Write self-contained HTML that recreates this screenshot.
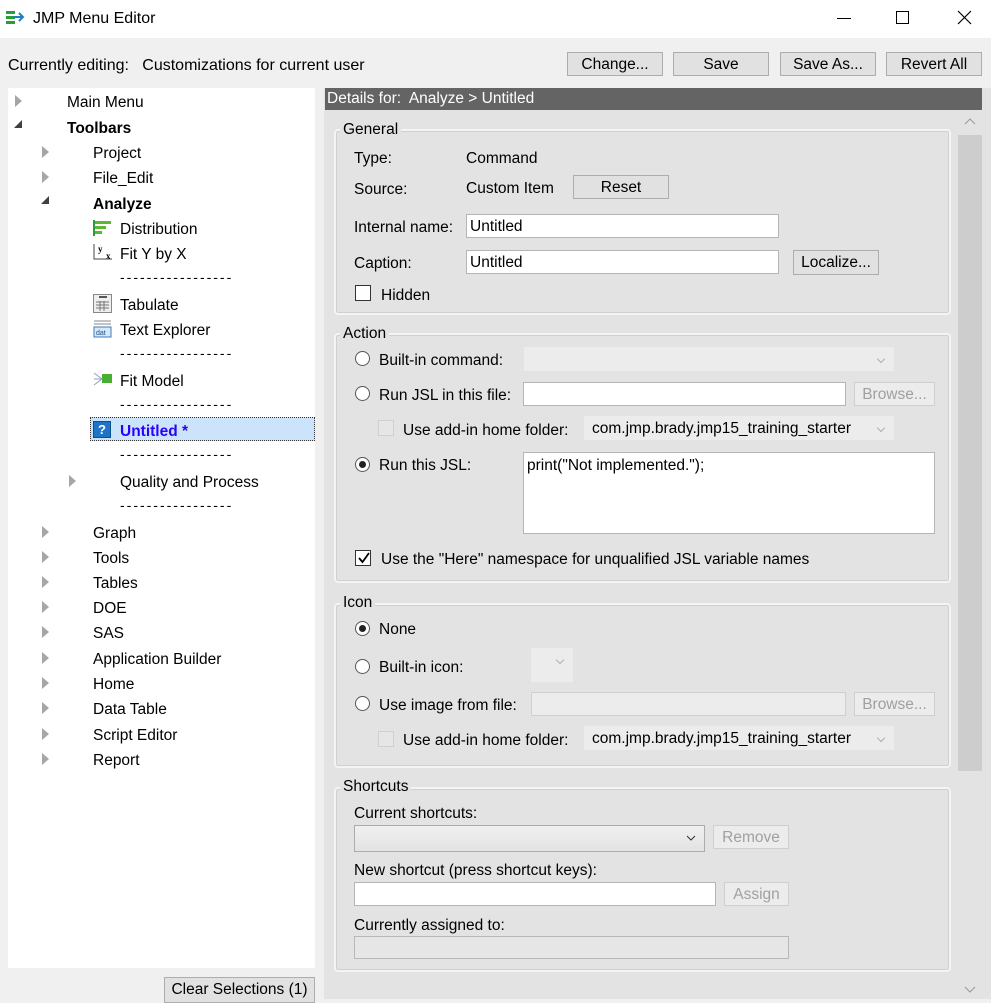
<!DOCTYPE html>
<html><head><meta charset="utf-8"><style>
*{box-sizing:border-box;margin:0;padding:0}
body{width:991px;height:999px;position:relative;background:#f0f0f0;font-family:"Liberation Sans",sans-serif;font-size:15.5px;color:#000;overflow:hidden}
.a{position:absolute;white-space:nowrap}
.t{position:absolute;height:20px;line-height:20px;white-space:nowrap;transform:translateY(2px)}
.btn{position:absolute;background:#e1e1e1;border:1px solid #adadad;text-align:center;line-height:24px;height:24px}
.dis{color:#a0a0a0;background:#ececec;border-color:#cfcfcf}
.in{position:absolute;background:#fff;border:1px solid #b5b5b5;height:24px;line-height:24px;padding-left:3px}
.grp{position:absolute;left:334px;width:617px;border:2px solid #f4f4f4;border-radius:4px;box-shadow:inset 0 0 0 1px #d0d0d0}
.gl{position:absolute;background:#e3e3e3;padding:0 3px;line-height:18px;transform:translateY(1px)}
.tri{position:absolute;width:0;height:0;border-top:6px solid transparent;border-bottom:6px solid transparent;border-left:7px solid #a6a6a6}
.tro{position:absolute;width:0;height:0;border-left:8px solid transparent;border-bottom:8px solid #404040}
.rad{position:absolute;width:15px;height:15px;border:1px solid #555;border-radius:50%;background:#fff}
.rad.on::after{content:"";position:absolute;left:3px;top:3px;width:7px;height:7px;border-radius:50%;background:#222}
.cb{position:absolute;width:16px;height:16px;border:1px solid #333;background:#fff}
.cbd{position:absolute;width:16px;height:16px;border:1px solid #cfcfcf;background:#e6e6e6}
.combo{position:absolute;background:#ececec;height:24px;line-height:26px;padding-left:8px}
.combo::after{content:"";position:absolute;right:10px;top:9px;width:5px;height:5px;border-right:1px solid #b0b0b0;border-bottom:1px solid #b0b0b0;transform:rotate(45deg)}
.dash{position:absolute;color:#000;font-size:14px;letter-spacing:2px;transform:translateY(3px)}
</style></head><body>
<div class="a" style="left:0;top:0;width:991px;height:38px;background:#fff"></div>
<svg class="a" style="left:5px;top:8px" width="20" height="20"><rect x="1" y="3" width="9" height="3" fill="#2a9d3a"/><rect x="1" y="8" width="9" height="3" fill="#2a9d3a"/><rect x="1" y="13" width="9" height="3" fill="#2a9d3a"/><path d="M8 9 L18 9 M14 5 L18 9 L14 13" stroke="#1e7fc8" stroke-width="2" fill="none"/></svg>
<div class="t" style="left:33px;top:7px;font-size:16px">JMP Menu Editor</div>
<div class="a" style="left:837px;top:18px;width:14px;height:1px;background:#000"></div>
<div class="a" style="left:896px;top:11px;width:13px;height:13px;border:1px solid #000"></div>
<svg class="a" style="left:957px;top:10px" width="15" height="15"><path d="M1 1L14 14M14 1L1 14" stroke="#000" stroke-width="1.2"/></svg>
<div class="t" style="left:8px;top:54px;font-size:16px">Currently editing:&nbsp;&nbsp; Customizations for current user</div>
<div class="btn" style="left:567px;top:52px;width:96px">Change...</div>
<div class="btn" style="left:673px;top:52px;width:96px">Save</div>
<div class="btn" style="left:780px;top:52px;width:96px">Save As...</div>
<div class="btn" style="left:886px;top:52px;width:96px">Revert All</div>
<div class="a" style="left:8px;top:88px;width:307px;height:880px;background:#fff"></div>
<div class="tri" style="left:15px;top:95px"></div><div class="t" style="left:67px;top:91px">Main Menu</div>
<div class="tro" style="left:14px;top:120px"></div><div class="t" style="left:67px;top:117px;font-weight:bold">Toolbars</div>
<div class="tri" style="left:42px;top:146px"></div><div class="t" style="left:93px;top:142px">Project</div>
<div class="tri" style="left:42px;top:171px"></div><div class="t" style="left:93px;top:167px">File_Edit</div>
<div class="tro" style="left:41px;top:196px"></div><div class="t" style="left:93px;top:193px;font-weight:bold">Analyze</div>
<svg class="a" style="left:93px;top:220px" width="20" height="16"><rect x="0" y="0" width="2" height="16" fill="#2a9d3a"/><rect x="2" y="1" width="16" height="3" fill="#5cb82e"/><rect x="2" y="6" width="11" height="3" fill="#5cb82e"/><rect x="2" y="11" width="7" height="3" fill="#5cb82e"/></svg>
<div class="t" style="left:120px;top:218px">Distribution</div>
<svg class="a" style="left:93px;top:243px" width="20" height="18"><path d="M1 1V16H19" stroke="#444" fill="none"/><text x="5" y="9" font-size="9" font-family="Liberation Serif" font-weight="bold">y</text><text x="13" y="16" font-size="9" font-family="Liberation Serif" font-weight="bold">x</text></svg>
<div class="t" style="left:120px;top:243px">Fit Y by X</div>
<div class="dash" style="left:120px;top:266px">-----------------</div>
<svg class="a" style="left:93px;top:294px" width="19" height="19"><rect x="0.5" y="0.5" width="18" height="18" fill="#eee" stroke="#888"/><rect x="6" y="2" width="8" height="2" fill="#555"/><path d="M3 8h13M3 11h13M3 14h13M7 7v10M11 7v10" stroke="#777"/></svg>
<div class="t" style="left:120px;top:294px">Tabulate</div>
<svg class="a" style="left:93px;top:319px" width="19" height="19"><path d="M1 2h17M1 5h17" stroke="#888"/><rect x="1" y="8" width="17" height="10" fill="#d8e8f8" stroke="#3a7cc0"/><text x="3" y="16" font-size="7" fill="#1a4f90">dat</text></svg>
<div class="t" style="left:120px;top:319px">Text Explorer</div>
<div class="dash" style="left:120px;top:342px">-----------------</div>
<svg class="a" style="left:93px;top:371px" width="20" height="16"><path d="M1 2L9 8M1 8H9M1 14L9 8" stroke="#8fa0c0"/><rect x="9" y="3" width="10" height="9" fill="#48b030"/></svg>
<div class="t" style="left:120px;top:370px">Fit Model</div>
<div class="dash" style="left:120px;top:393px">-----------------</div>
<div class="a" style="left:90px;top:417px;width:225px;height:24px;background:#cce4fb;border:1px dotted #333"></div>
<div class="a" style="left:93px;top:421px;width:18px;height:17px;background:#1e74c6;border:1px solid #0d4f8f;color:#fff;font-weight:bold;font-size:13px;text-align:center;line-height:15px">?</div>
<div class="t" style="left:120px;top:420px;font-weight:bold;color:#2b00ff">Untitled *</div>
<div class="dash" style="left:120px;top:443px">-----------------</div>
<div class="tri" style="left:69px;top:475px"></div><div class="t" style="left:120px;top:471px">Quality and Process</div>
<div class="dash" style="left:120px;top:494px">-----------------</div>
<div class="tri" style="left:42px;top:526px"></div><div class="t" style="left:93px;top:522px">Graph</div>
<div class="tri" style="left:42px;top:551px"></div><div class="t" style="left:93px;top:547px">Tools</div>
<div class="tri" style="left:42px;top:576px"></div><div class="t" style="left:93px;top:572px">Tables</div>
<div class="tri" style="left:42px;top:601px"></div><div class="t" style="left:93px;top:597px">DOE</div>
<div class="tri" style="left:42px;top:626px"></div><div class="t" style="left:93px;top:622px">SAS</div>
<div class="tri" style="left:42px;top:652px"></div><div class="t" style="left:93px;top:648px">Application Builder</div>
<div class="tri" style="left:42px;top:677px"></div><div class="t" style="left:93px;top:673px">Home</div>
<div class="tri" style="left:42px;top:702px"></div><div class="t" style="left:93px;top:698px">Data Table</div>
<div class="tri" style="left:42px;top:728px"></div><div class="t" style="left:93px;top:724px">Script Editor</div>
<div class="tri" style="left:42px;top:753px"></div><div class="t" style="left:93px;top:749px">Report</div>
<div class="btn" style="left:164px;top:977px;width:151px;height:26px">Clear Selections (1)</div>
<div class="a" style="left:324px;top:88px;width:667px;height:911px;background:#e3e3e3"></div>
<div class="a" style="left:325px;top:88px;width:657px;height:22px;background:#646464;color:#fff;line-height:22px;padding-left:2px">Details for:&nbsp; Analyze &gt; Untitled</div>
<div class="a" style="left:958px;top:135px;width:24px;height:636px;background:#cdcdcd"></div>
<svg class="a" style="left:964px;top:118px" width="12" height="8"><path d="M1 6L6 1L11 6" stroke="#999" fill="none"/></svg>
<svg class="a" style="left:964px;top:986px" width="12" height="8"><path d="M1 1L6 6L11 1" stroke="#999" fill="none"/></svg>
<div class="grp" style="top:129px;height:186px"></div>
<div class="gl" style="left:340px;top:120px">General</div>
<div class="t" style="left:354px;top:147px">Type:</div><div class="t" style="left:466px;top:147px">Command</div>
<div class="t" style="left:354px;top:178px">Source:</div><div class="t" style="left:466px;top:177px">Custom Item</div>
<div class="btn" style="left:573px;top:175px;width:96px">Reset</div>
<div class="t" style="left:354px;top:216px">Internal name:</div>
<div class="in" style="left:466px;top:214px;width:313px">Untitled</div>
<div class="t" style="left:354px;top:252px">Caption:</div>
<div class="in" style="left:466px;top:250px;width:313px">Untitled</div>
<div class="btn" style="left:793px;top:250px;width:86px;height:25px">Localize...</div>
<div class="cb" style="left:355px;top:285px"></div><div class="t" style="left:381px;top:284px">Hidden</div>
<div class="grp" style="top:333px;height:250px"></div>
<div class="gl" style="left:340px;top:324px">Action</div>
<div class="rad" style="left:355px;top:351px"></div><div class="t" style="left:379px;top:349px">Built-in command:</div>
<div class="combo" style="left:524px;top:347px;width:370px"></div>
<div class="rad" style="left:355px;top:386px"></div><div class="t" style="left:379px;top:384px">Run JSL in this file:</div>
<div class="in" style="left:523px;top:382px;width:323px"></div>
<div class="btn dis" style="left:854px;top:382px;width:81px">Browse...</div>
<div class="cbd" style="left:378px;top:420px"></div><div class="t" style="left:403px;top:419px">Use add-in home folder:</div>
<div class="combo" style="left:584px;top:416px;width:310px">com.jmp.brady.jmp15_training_starter</div>
<div class="rad on" style="left:355px;top:457px"></div><div class="t" style="left:379px;top:454px">Run this JSL:</div>
<div class="a" style="left:523px;top:452px;width:412px;height:82px;background:#fff;border:1px solid #b5b5b5;padding:3px 3px;line-height:20px">print("Not implemented.");</div>
<div class="cb" style="left:355px;top:550px"></div>
<svg class="a" style="left:357px;top:551px" width="14" height="14"><path d="M2 7L5.5 11L12 2" stroke="#000" stroke-width="1.8" fill="none"/></svg>
<div class="t" style="left:381px;top:548px">Use the "Here" namespace for unqualified JSL variable names</div>
<div class="grp" style="top:603px;height:165px"></div>
<div class="gl" style="left:340px;top:593px">Icon</div>
<div class="rad on" style="left:355px;top:621px"></div><div class="t" style="left:379px;top:618px">None</div>
<div class="rad" style="left:355px;top:659px"></div><div class="t" style="left:379px;top:656px">Built-in icon:</div>
<div class="combo" style="left:531px;top:648px;width:42px;height:34px"></div>
<div class="rad" style="left:355px;top:696px"></div><div class="t" style="left:379px;top:694px">Use image from file:</div>
<div class="a" style="left:531px;top:692px;width:315px;height:24px;background:#ececec;border:1px solid #d0d0d0"></div>
<div class="btn dis" style="left:854px;top:692px;width:81px">Browse...</div>
<div class="cbd" style="left:378px;top:731px"></div><div class="t" style="left:403px;top:729px">Use add-in home folder:</div>
<div class="combo" style="left:584px;top:726px;width:310px">com.jmp.brady.jmp15_training_starter</div>
<div class="grp" style="top:787px;height:185px"></div>
<div class="gl" style="left:340px;top:777px">Shortcuts</div>
<div class="t" style="left:354px;top:802px">Current shortcuts:</div>
<div class="a" style="left:354px;top:825px;width:351px;height:27px;background:linear-gradient(#f0f0f0,#e3e3e3);border:1px solid #acacac"></div>
<svg class="a" style="left:686px;top:835px" width="10" height="7"><path d="M1 1L5 5L9 1" stroke="#333" fill="none"/></svg>
<div class="btn dis" style="left:713px;top:825px;width:76px">Remove</div>
<div class="t" style="left:354px;top:859px">New shortcut (press shortcut keys):</div>
<div class="in" style="left:354px;top:882px;width:362px"></div>
<div class="btn dis" style="left:724px;top:882px;width:65px">Assign</div>
<div class="t" style="left:354px;top:914px">Currently assigned to:</div>
<div class="a" style="left:354px;top:936px;width:435px;height:23px;background:#e6e6e6;border:1px solid #b8b8b8"></div>
</body></html>
